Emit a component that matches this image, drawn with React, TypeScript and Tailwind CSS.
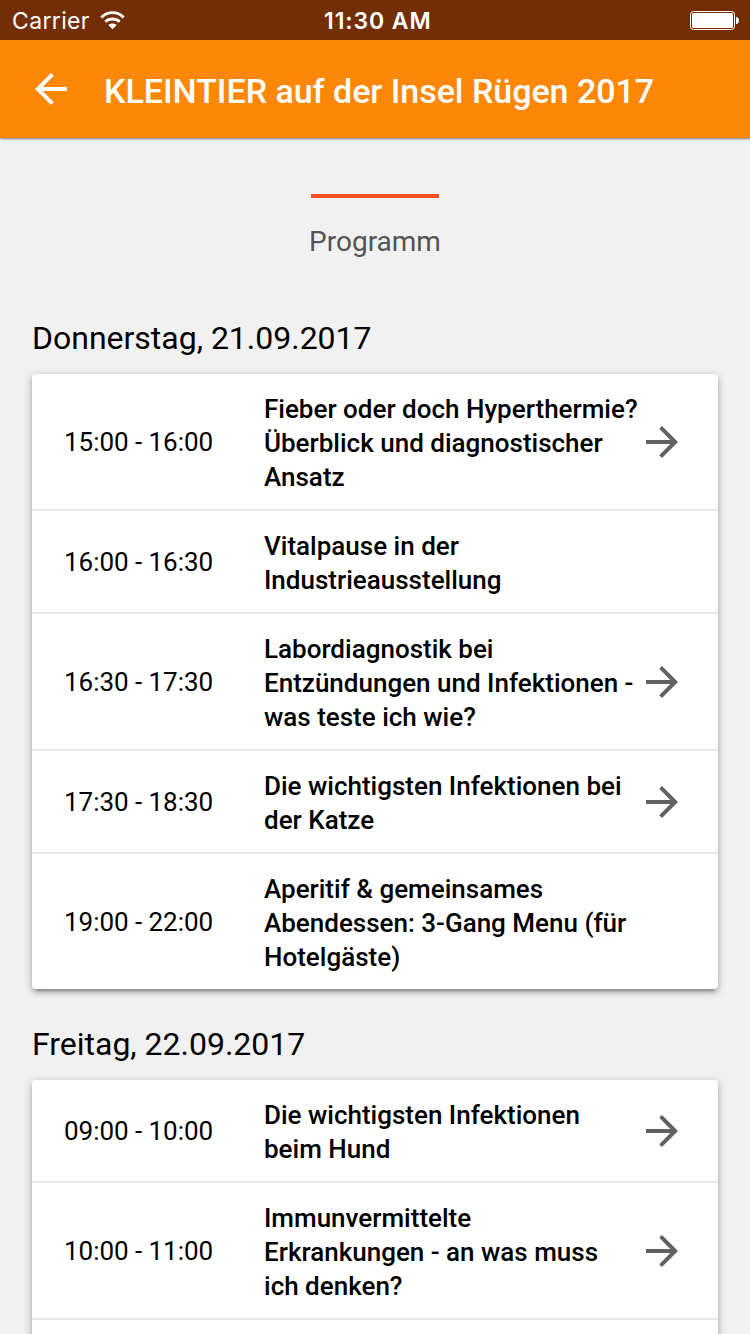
const sessions = [
  {
    day: "Donnerstag, 21.09.2017",
    items: [
      { time: "15:00 - 16:00", lines: ["Fieber oder doch Hyperthermie?", "Überblick und diagnostischer", "Ansatz"], link: true },
      { time: "16:00 - 16:30", lines: ["Vitalpause in der", "Industrieausstellung"], link: false },
      { time: "16:30 - 17:30", lines: ["Labordiagnostik bei", "Entzündungen und Infektionen -", "was teste ich wie?"], link: true },
      { time: "17:30 - 18:30", lines: ["Die wichtigsten Infektionen bei", "der Katze"], link: true },
      { time: "19:00 - 22:00", lines: ["Aperitif & gemeinsames", "Abendessen: 3-Gang Menu (für", "Hotelgäste)"], link: false },
    ],
  },
  {
    day: "Freitag, 22.09.2017",
    items: [
      { time: "09:00 - 10:00", lines: ["Die wichtigsten Infektionen", "beim Hund"], link: true },
      { time: "10:00 - 11:00", lines: ["Immunvermittelte", "Erkrankungen - an was muss", "ich denken?"], link: true },
      { time: "", lines: ["", ""], link: false },
    ],
  },
];

function StatusBar() {
  return (
    <div className="flex h-10 shrink-0 items-center justify-between bg-[#732e05] pr-[11px] pl-3 font-['Inter',sans-serif] text-white">
      <div className="flex w-[312px] items-center gap-2.5">
        <span className="pt-0.5 text-[23px] leading-[38px] tracking-[0.35px]">Carrier</span>
        <svg width="25" height="19" viewBox="0 0 25 19" fill="none" stroke="white" strokeWidth="2.9">
          <path d="M1.3 6.4C7.6 0 17.4 0 23.7 6.4M5.3 10.8C9.3 7 15.7 7 19.7 10.8" />
          <path d="M12.5 18.3 8.3 14C10.6 12 14.4 12 16.7 14Z" fill="white" stroke="none" />
        </svg>
      </div>
      <span className="grow pt-0.5 text-[23px] leading-[38px] font-[560] tracking-[0.9px] whitespace-nowrap">11:30 AM</span>
      <svg className="mt-px" width="49" height="19" viewBox="0 0 49 19">
        <rect x=".5" y=".5" width="44" height="18" rx="3" fill="none" stroke="white" />
        <rect x="2" y="2" width="41" height="15" rx="1.5" fill="white" />
        <path d="M46 6h1q2 1.2 2 3.5t-2 3.5h-1Z" fill="white" />
      </svg>
    </div>
  );
}

function Arrow() {
  return (
    <svg className="shrink-0" width="32" height="32" viewBox="0 0 32 32" fill="#616161">
      <path d="M16 0 13.2 2.8 24.3 14H0v4h24.3L13.2 29.2 16 32 32 16Z" />
    </svg>
  );
}

export default function App() {
  return (
    <div className="flex h-[1334px] w-[750px] flex-col overflow-hidden bg-[#f1f1f1] font-['Roboto',sans-serif] text-black">
      <StatusBar />
      <header className="z-10 flex h-[98px] shrink-0 items-center bg-[#ff8708] pl-[35px] text-white shadow-[0_1px_2px_rgba(0,0,0,0.5)]">
        <svg width="32" height="32" viewBox="0 0 32 32" fill="white">
          <path d="M32 14H7.7L18.8 2.8 16 0 0 16l16 16 2.8-2.8L7.7 18H32Z" />
        </svg>
        <h1 className="ml-[37px] pt-[3px] text-[34px] leading-10 font-medium tracking-[-0.03px] whitespace-nowrap">KLEINTIER auf der Insel Rügen 2017</h1>
      </header>
      <div className="flex h-[180px] shrink-0 flex-col items-center pt-14">
        <div className="h-1 w-32 bg-[#f4511e]" />
        <p className="mt-7 text-[28px] leading-8 text-[#545454]">Programm</p>
      </div>
      <main className="flex flex-col px-8">
        {sessions.map((group) => (
          <section key={group.day} className="mb-[35px]">
            <h2 className="text-[32px] leading-10 tracking-[-0.01px] whitespace-nowrap">{group.day}</h2>
            <div className="mt-4 rounded-[4px] bg-white shadow-[0_4px_4px_rgba(0,0,0,0.14),0_6px_2px_-4px_rgba(0,0,0,0.2),0_2px_10px_rgba(0,0,0,0.24)]">
              {group.items.map((item, index) => (
                <div key={index} className="flex items-center border-b-2 border-[#e6e6e6] pt-4 pr-10 pb-[15px] pl-8 last:border-b-0">
                  <span className="w-[200px] text-[26px] tracking-[-0.04px] whitespace-nowrap">{item.time}</span>
                  <div className="w-[382px] shrink-0 pt-0.5 text-[26px] leading-[34px] font-medium whitespace-nowrap">
                    {item.lines.map((line, i) => <div key={i} className="h-[34px]">{line}</div>)}
                  </div>
                  {item.link && <Arrow />}
                </div>
              ))}
            </div>
          </section>
        ))}
      </main>
    </div>
  );
}
